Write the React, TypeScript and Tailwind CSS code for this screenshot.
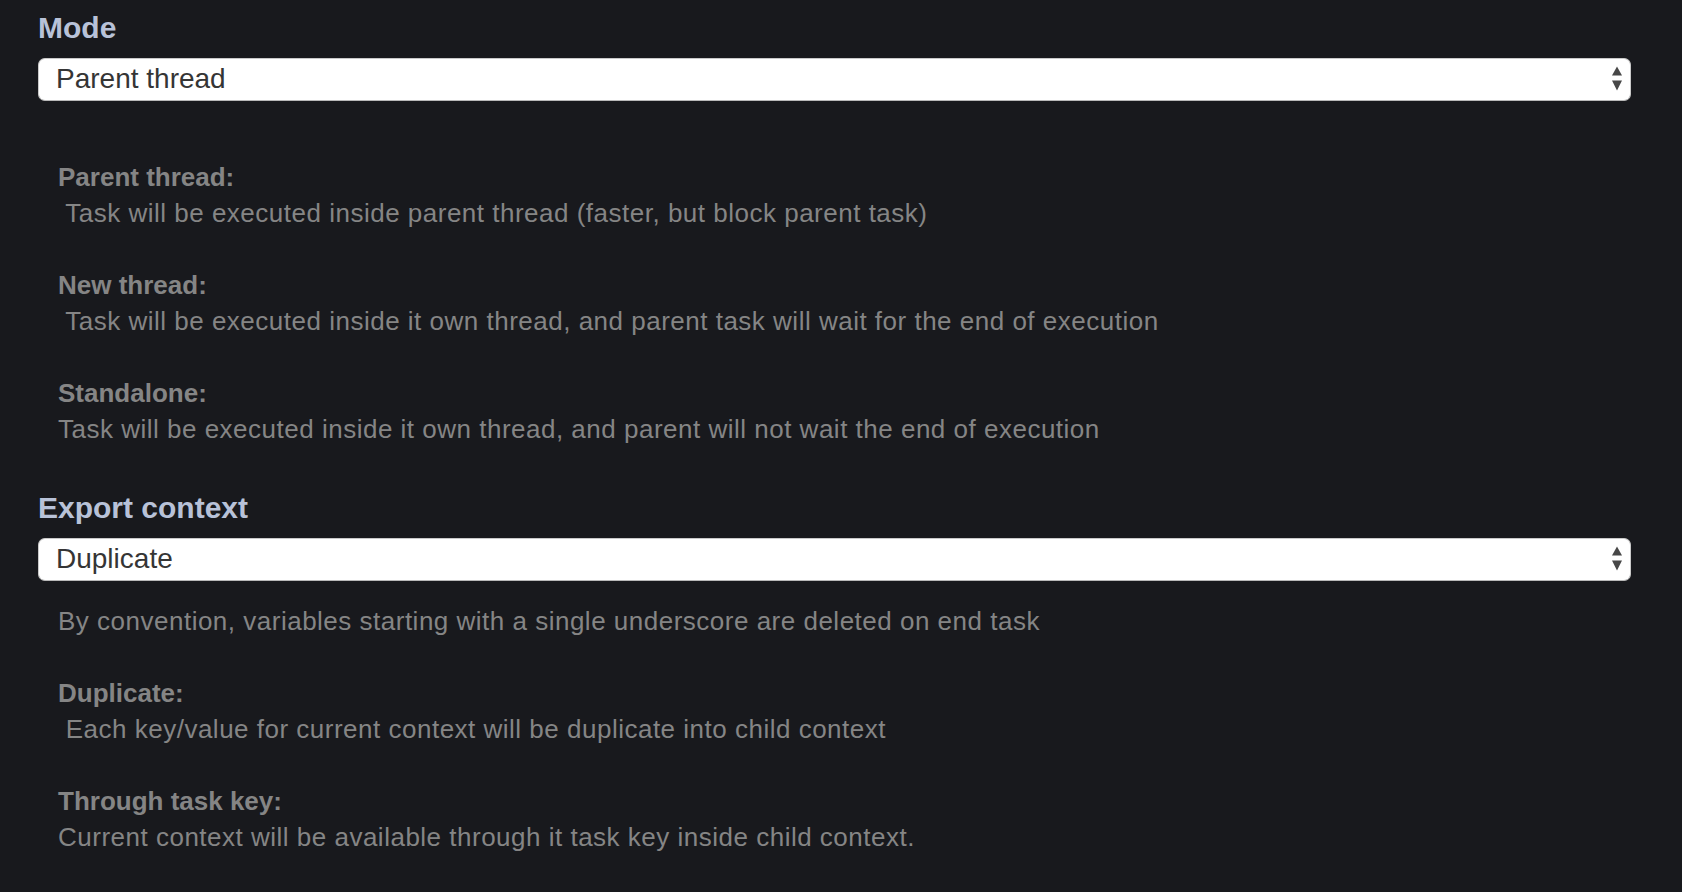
import React from "react";

const font = { fontFamily: '"Liberation Sans", Arial, Helvetica, sans-serif' };

function Arrows() {
  return (
    <svg width="10" height="25" viewBox="0 0 10 25" className="ml-auto shrink-0">
      <polygon points="0,9.5 5,0.5 10,9.5" fill="#474747" />
      <polygon points="0,14.5 10,14.5 5,24.5" fill="#474747" />
    </svg>
  );
}

function FakeSelect({ value }: { value: string }) {
  return (
    <div className="mt-[12px] flex h-[43px] items-center rounded-[7px] border border-[#c9c9c9] border-b-[#b9b9b9] bg-white pl-[17px] pr-[8px] pb-[2px] text-[28px] text-[#353535]">
      <span>{value}</span>
      <Arrows />
    </div>
  );
}

function Label({ children }: { children: React.ReactNode }) {
  return <div className="text-[30px] font-bold leading-[36px] text-[#b8c2d8]">{children}</div>;
}

function Item({ title, text, last }: { title: string; text: string; last?: boolean }) {
  return (
    <div className={last ? "" : "mb-[36px]"}>
      <div className="font-bold">{title}</div>
      <div className="whitespace-pre tracking-[0.5px]">{text}</div>
    </div>
  );
}

export default function App() {
  return (
    <div className="min-h-screen w-full bg-[#18191d] pl-[38px] pr-[51px] pt-[10px]" style={font}>
      <section>
        <Label>Mode</Label>
        <FakeSelect value="Parent thread" />
        <div className="mt-[58px] pl-[20px] text-[26px] leading-[36px] text-[#858585]">
          <Item
            title="Parent thread:"
            text=" Task will be executed inside parent thread (faster, but block parent task)"
          />
          <Item
            title="New thread:"
            text=" Task will be executed inside it own thread, and parent task will wait for the end of execution"
          />
          <Item
            title="Standalone:"
            text="Task will be executed inside it own thread, and parent will not wait the end of execution"
            last
          />
        </div>
      </section>
      <section className="mt-[43px]">
        <Label>Export context</Label>
        <FakeSelect value="Duplicate" />
        <div className="mt-[22px] pl-[20px] text-[26px] leading-[36px] text-[#858585]">
          <div className="mb-[36px] tracking-[0.5px]">
            By convention, variables starting with a single underscore are deleted on end task
          </div>
          <Item
            title="Duplicate:"
            text=" Each key/value for current context will be duplicate into child context"
          />
          <Item
            title="Through task key:"
            text="Current context will be available through it task key inside child context."
            last
          />
        </div>
      </section>
    </div>
  );
}
